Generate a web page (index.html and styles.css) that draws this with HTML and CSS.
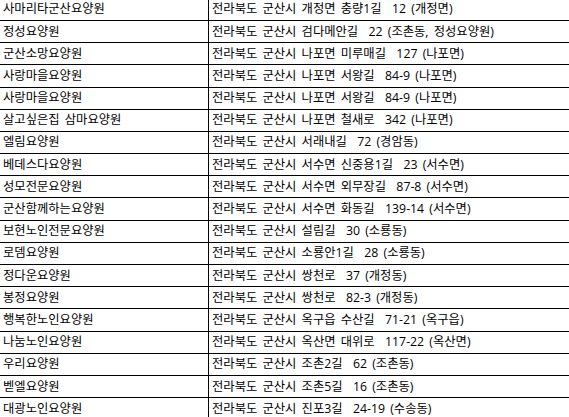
FILE: index.html
```html
<!DOCTYPE html>
<html lang="ko">
<head>
<meta charset="utf-8">
<title>군산시 요양원 목록</title>
<link rel="stylesheet" href="styles.css">
</head>
<body>
<table class="list">
<colgroup><col class="c-name"><col class="c-addr"></colgroup>
<tbody>
<tr><td>사마리타군산요양원</td><td>전라북도 군산시 개정면 충량1길  12 (개정면)</td></tr>
<tr><td>정성요양원</td><td>전라북도 군산시 검다메안길  22 (조촌동, 정성요양원)</td></tr>
<tr><td>군산소망요양원</td><td>전라북도 군산시 나포면 미루매길  127 (나포면)</td></tr>
<tr><td>사랑마을요양원</td><td>전라북도 군산시 나포면 서왕길  84-9 (나포면)</td></tr>
<tr><td>사랑마을요양원</td><td>전라북도 군산시 나포면 서왕길  84-9 (나포면)</td></tr>
<tr><td>살고싶은집 삼마요양원</td><td>전라북도 군산시 나포면 철새로  342 (나포면)</td></tr>
<tr><td>엘림요양원</td><td>전라북도 군산시 서래내길  72 (경암동)</td></tr>
<tr><td>베데스다요양원</td><td>전라북도 군산시 서수면 신중용1길  23 (서수면)</td></tr>
<tr><td>성모전문요양원</td><td>전라북도 군산시 서수면 외무장길  87-8 (서수면)</td></tr>
<tr><td>군산함께하는요양원</td><td>전라북도 군산시 서수면 화동길  139-14 (서수면)</td></tr>
<tr><td>보현노인전문요양원</td><td>전라북도 군산시 설림길  30 (소룡동)</td></tr>
<tr><td>로뎀요양원</td><td>전라북도 군산시 소룡안1길  28 (소룡동)</td></tr>
<tr><td>정다운요양원</td><td>전라북도 군산시 쌍천로  37 (개정동)</td></tr>
<tr><td>봉정요양원</td><td>전라북도 군산시 쌍천로  82-3 (개정동)</td></tr>
<tr><td>행복한노인요양원</td><td>전라북도 군산시 옥구읍 수산길  71-21 (옥구읍)</td></tr>
<tr><td>나눔노인요양원</td><td>전라북도 군산시 옥산면 대위로  117-22 (옥산면)</td></tr>
<tr><td>우리요양원</td><td>전라북도 군산시 조촌2길  62 (조촌동)</td></tr>
<tr><td>벧엘요양원</td><td>전라북도 군산시 조촌5길  16 (조촌동)</td></tr>
<tr><td>대광노인요양원</td><td>전라북도 군산시 진포3길  24-19 (수송동)</td></tr>
</tbody>
</table>
</body>
</html>
```

FILE: styles.css
```css
html, body {
  margin: 0;
  padding: 0;
  background: #fff;
  overflow: hidden;
}

.list {
  border-collapse: collapse;
  width: 571px;
  margin: -2.25px 0 0 -1px;
  table-layout: fixed;
  font-family: "Open Sans", "Noto Sans CJK KR", sans-serif;
  font-size: 12.3px;
  word-spacing: 2px;
  color: #000;
}

.c-name { width: 209px; }

.list tr { height: 22.2px; }

.list td {
  border: 1px solid #000;
  padding: 0 3px;
  line-height: 14px;
  white-space: pre;
  overflow: hidden;
  vertical-align: middle;
}
```
